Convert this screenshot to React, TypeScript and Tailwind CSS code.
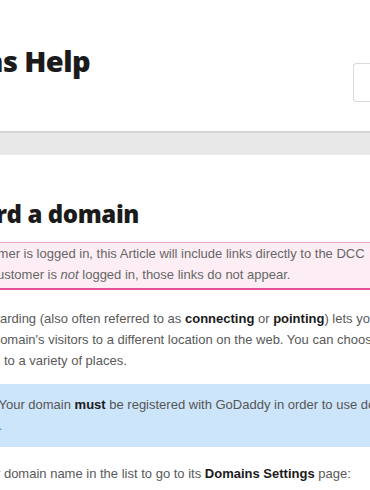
import React from "react";

export default function App() {
  return (
    <div className="w-[370px] h-[490px] overflow-hidden bg-white font-['Liberation_Sans',Arial,sans-serif] text-[13px] leading-[21px] text-[#595959]">
      {/* Header */}
      <div className="flex items-start justify-between h-[131px]">
        <div className="mt-[43px] w-[90px] flex justify-end whitespace-nowrap">
          <h1 className="font-['Open_Sans',sans-serif] font-extrabold text-[29px] leading-[36px] tracking-[-0.6px] text-[#1b1b1b]">
            Domains Help
          </h1>
        </div>
        <div className="mt-[63px] w-[17px] h-[39px] border border-r-0 border-[#dadada] rounded-l-[4px] bg-white" />
      </div>

      {/* Gray band */}
      <div className="h-[24px] border-t-2 border-[#d6d6d6] bg-[#e8e8e8]" />

      {/* Title */}
      <div className="mt-[43px] w-[139px] flex justify-end whitespace-nowrap">
        <h2 className="font-['Open_Sans',sans-serif] font-extrabold text-[24px] leading-[32px] tracking-[-0.4px] text-[#1b1b1b]">
          Forward a domain
        </h2>
      </div>

      {/* Pink note */}
      <div className="mt-[12px] bg-[#fdeef5] border-t border-[#f2a8c8] border-b-2 border-b-[#e4509a] pb-[3px] text-[#666]">
        <div className="whitespace-nowrap -ml-[66px]">
          If the customer is logged in, this Article will include links directly to the DCC
        </div>
        <div className="whitespace-nowrap -ml-[42px]">
          If the customer is <em>not</em> logged in, those links do not appear.
        </div>
      </div>

      {/* Paragraph */}
      <div className="mt-[18px]">
        <div className="whitespace-nowrap -ml-[73px]">
          Domain forwarding (also often referred to as{" "}
          <b className="text-[#1a1a1a]">connecting</b> or{" "}
          <b className="text-[#1a1a1a]">pointing</b>) lets you send
        </div>
        <div className="whitespace-nowrap -ml-[36px]">
          your domain's visitors to a different location on the web. You can choose
        </div>
        <div className="whitespace-nowrap -ml-[43px]">
          forward to a variety of places.
        </div>
      </div>

      {/* Blue note */}
      <div className="mt-[13px] bg-[#cde5fb] pt-[10px] pb-[11px] text-[#555]">
        <div className="whitespace-nowrap -ml-[36px]">
          Note: Your domain <b className="text-[#1a1a1a]">must</b> be registered with GoDaddy in order to use domain forwarding
        </div>
        <div className="whitespace-nowrap -ml-[62px] text-[#3d8fd6]">
          forwarding.
        </div>
      </div>

      {/* Step */}
      <div className="mt-[16px] whitespace-nowrap -ml-[25px]">
        your domain name in the list to go to its{" "}
        <b className="text-[#1a1a1a]">Domains Settings</b> page:
      </div>
    </div>
  );
}
